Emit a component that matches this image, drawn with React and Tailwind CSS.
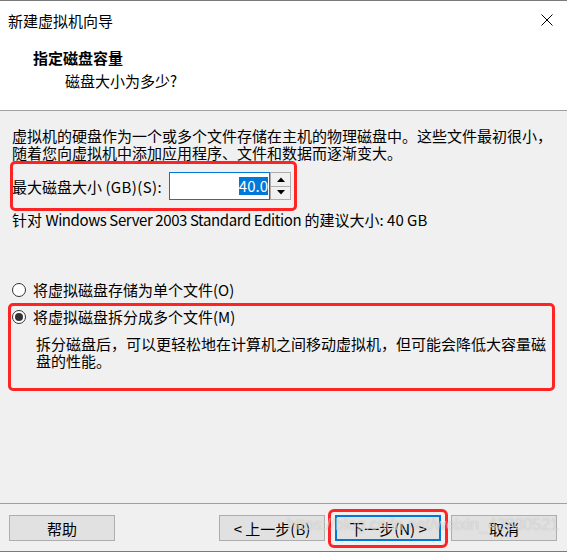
import React from 'react';

const Radio = ({ checked }) => (
  <span className="flex h-[14px] w-[14px] shrink-0 items-center justify-center rounded-full border border-[#333333] bg-white">
    {checked && <span className="h-[8px] w-[8px] rounded-full bg-[#333333]" />}
  </span>
);

const Arrow = ({ up }) => (
  <svg width="8" height="5" viewBox="0 0 8 5">
    <path d={up ? 'M0 5 L4 0.5 L8 5 Z' : 'M0 0 L4 4.5 L8 0 Z'} fill="#000" />
  </svg>
);

const Btn = ({ children, primary }) => (
  <button
    className={
      primary
        ? 'h-[26px] w-[106px] border-2 border-[#0078d7] bg-[#e1e1e1] text-[15px] leading-[17px] text-black'
        : 'h-[26px] w-[106px] border border-[#adadad] bg-[#e1e1e1] text-[15px] leading-[17px] text-black'
    }
  >
    {children}
  </button>
);

export default function App() {
  return (
    <div className="relative flex h-[552px] w-[567px] flex-col overflow-hidden border-y border-[#7a7a7a] bg-[#f0f0f0] font-['Noto_Sans_CJK_SC','Noto_Sans',sans-serif] text-[15px] leading-[17px] text-black">
      {/* header */}
      <div className="h-[110px] shrink-0 border-b border-[#a0a0a0] bg-white">
        <div className="flex h-[38px] items-center justify-between pl-2 pr-[14px]">
          <span>新建虚拟机向导</span>
          <svg width="12" height="12" viewBox="0 0 12 12">
            <path d="M0.5 0.5 L11.5 11.5 M11.5 0.5 L0.5 11.5" stroke="#000" strokeWidth="1" />
          </svg>
        </div>
        <div className="mt-[10px] pl-[33px] font-bold">指定磁盘容量</div>
        <div className="mt-[6px] pl-[65px]">磁盘大小为多少?</div>
      </div>

      {/* body */}
      <div className="flex flex-1 flex-col px-3 pt-4">
        <p>
          虚拟机的硬盘作为一个或多个文件存储在主机的物理磁盘中。这些文件最初很小，
          <br />
          随着您向虚拟机中添加应用程序、文件和数据而逐渐变大。
        </p>

        <div className="mt-[11px] flex h-[28px] items-center">
          <span className="w-[157px] shrink-0 whitespace-nowrap">
            最大磁盘大小 <span className="tracking-[0.4px]">(GB)(S):</span>
          </span>
          <div className="flex h-[28px] w-[101px] items-center justify-end border border-[#0078d7] bg-white pr-[1px]">
            <span className="bg-[#0078d7] leading-[18px] text-white">40.0</span>
          </div>
          <div className="flex h-[28px] w-[21px] flex-col border border-[#adadad] bg-[#f0f0f0]">
            <div className="flex flex-1 items-center justify-center border-b border-[#adadad]">
              <Arrow up />
            </div>
            <div className="flex flex-1 items-center justify-center">
              <Arrow />
            </div>
          </div>
        </div>

        <p className="mt-[11px]">
          针对 <span className="tracking-[-0.4px]">Windows Server 2003 Standard Edition</span> 的建议大小: 40 GB
        </p>

        <label className="mt-[53px] flex h-[17px] items-center gap-[7px]">
          <Radio />
          <span>将虚拟磁盘存储为单个文件(O)</span>
        </label>
        <label className="mt-[10px] flex h-[17px] items-center gap-[7px]">
          <Radio checked />
          <span>将虚拟磁盘拆分成多个文件(M)</span>
        </label>
        <p className="mt-[10px] pl-6">
          拆分磁盘后，可以更轻松地在计算机之间移动虚拟机，但可能会降低大容量磁
          <br />
          盘的性能。
        </p>
      </div>

      {/* footer */}
      <div className="flex h-[48px] shrink-0 items-start border-t border-[#a0a0a0] pl-[9px] pr-[10px] pt-[11px]">
        <Btn>帮助</Btn>
        <div className="flex-1" />
        <div className="flex gap-[10px]">
          <Btn>&lt; 上一步(B)</Btn>
          <Btn primary>下一步(N) &gt;</Btn>
          <Btn>取消</Btn>
        </div>
      </div>

      {/* red annotation marks */}
      <div className="pointer-events-none absolute left-[10px] top-[160px] h-[50px] w-[287px] rounded-[5px] border-[3px] border-[#ff2424]" />
      <div className="pointer-events-none absolute left-[8px] top-[302px] h-[88px] w-[547px] rounded-[5px] border-[3px] border-[#ff2424]" />
      <div className="pointer-events-none absolute left-[328px] top-[508px] h-[39px] w-[120px] rounded-[6px] border-[3px] border-[#ff2424]" />

      {/* watermark */}
      <div className="pointer-events-none absolute left-[287px] top-[514px] whitespace-nowrap font-['Liberation_Sans',sans-serif] text-[16px] leading-[20px] text-white/55 [text-shadow:0_0_1px_rgba(0,0,0,0.25)]">
        https://blog.csdn.net/weixin_43830521
      </div>
    </div>
  );
}
